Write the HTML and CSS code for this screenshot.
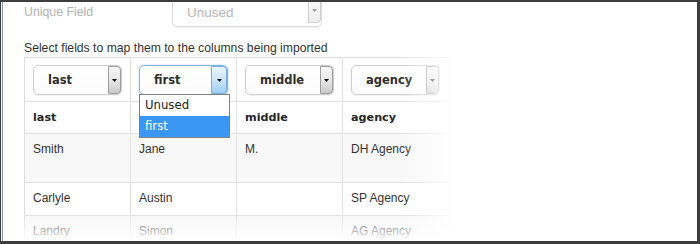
FILE: index.html
```html
<!DOCTYPE html>
<html>
<head>
<meta charset="utf-8">
<link rel="stylesheet" href="styles.css">
</head>
<body>
<div class="frame">
  <div class="page">
    <div class="field-row">
      <div class="field-label">Unique Field</div>
      <div class="uselect">
        <span class="uselect-text">Unused</span>
        <span class="btn btn-disabled"><svg width="5" height="3" viewBox="0 0 5 3"><polygon points="0,0 5,0 2.5,3" fill="#9a9a9a"/></svg></span>
      </div>
    </div>
    <div class="hint">Select fields to map them to the columns being imported</div>
    <div class="grid">
      <div class="cell sel-cell">
        <div class="select"><span class="select-text">last</span><span class="btn"><svg width="5" height="3" viewBox="0 0 5 3"><polygon points="0,0 5,0 2.5,3" fill="#111"/></svg></span></div>
      </div>
      <div class="cell sel-cell">
        <div class="select focus"><span class="select-text">first</span><span class="btn btn-focus"><svg width="5" height="3" viewBox="0 0 5 3"><polygon points="0,0 5,0 2.5,3" fill="#111"/></svg></span>
          <div class="dropdown">
            <div class="opt">Unused</div>
            <div class="opt opt-on">first</div>
          </div>
        </div>
      </div>
      <div class="cell sel-cell">
        <div class="select"><span class="select-text">middle</span><span class="btn"><svg width="5" height="3" viewBox="0 0 5 3"><polygon points="0,0 5,0 2.5,3" fill="#111"/></svg></span></div>
      </div>
      <div class="cell sel-cell">
        <div class="select"><span class="select-text">agency</span><span class="btn"><svg width="5" height="3" viewBox="0 0 5 3"><polygon points="0,0 5,0 2.5,3" fill="#111"/></svg></span></div>
      </div>

      <div class="cell head">last</div>
      <div class="cell head">first</div>
      <div class="cell head">middle</div>
      <div class="cell head">agency</div>

      <div class="cell data tall odd">Smith</div>
      <div class="cell data tall odd">Jane</div>
      <div class="cell data tall odd">M.</div>
      <div class="cell data tall odd">DH Agency</div>

      <div class="cell data">Carlyle</div>
      <div class="cell data">Austin</div>
      <div class="cell data"></div>
      <div class="cell data">SP Agency</div>

      <div class="cell data odd">Landry</div>
      <div class="cell data odd">Simon</div>
      <div class="cell data odd"></div>
      <div class="cell data odd">AG Agency</div>
    </div>
  </div>
  <div class="fade-right"></div>
  <div class="fade-bottom"></div>
</div>
</body>
</html>
```

FILE: styles.css
```css
html, body {
  margin: 0;
  padding: 0;
  background: #fff;
}
body {
  width: 700px;
  height: 244px;
  overflow: hidden;
}
.frame {
  position: relative;
  width: 700px;
  height: 244px;
  box-sizing: border-box;
  border-style: solid;
  border-color: #3d3d3d;
  border-width: 2px 3px 3px 1px;
  background: #fff;
  overflow: hidden;
  box-shadow: inset 1px 0 0 #f4f4f4, inset 2px 0 0 #8a98ad;
  font-family: "Liberation Sans", Arial, sans-serif;
  color: #333;
}
.page {
  padding-left: 23px;
}
.field-row {
  display: flex;
  align-items: center;
  height: 30px;
  margin-top: -5px;
}
.field-label {
  width: 148px;
  font-size: 12.3px;
  color: #b3b3b3;
  line-height: 14px;
  margin-top: -1px;
}
.uselect {
  display: flex;
  width: 150px;
  height: 30px;
  box-sizing: border-box;
  border: 1px solid #dcdcdc;
  border-radius: 5px;
  background: #fff;
  box-shadow: 0 1px 1px rgba(0,0,0,0.05);
}
.uselect-text {
  flex: 1;
  padding-left: 14px;
  font-size: 13.5px;
  line-height: 29px;
  color: #b5b5b5;
}
.hint {
  margin-top: 14px;
  font-size: 12.2px;
  line-height: 14px;
  color: #333;
}
.grid {
  margin-top: 2px;
  display: grid;
  grid-template-columns: repeat(4, 106px);
  border-top: 1px solid #dedede;
  border-left: 1px solid #dedede;
  width: max-content;
}
.cell {
  box-sizing: border-box;
  border-right: 1px solid #e2e2e2;
  border-bottom: 1px solid #e0e0e0;
  background: #fff;
}
.sel-cell {
  height: 44px;
  padding: 7px 0 0 8px;
}
.head {
  height: 32px;
  padding: 8px 8px 0;
  font-family: "DejaVu Sans", Verdana, sans-serif;
  font-weight: bold;
  font-size: 11.2px;
  line-height: 15px;
  color: #262626;
}
.data {
  height: 33px;
  padding: 8px 8px 0;
  font-size: 12px;
  line-height: 15px;
  color: #333;
}
.data.tall {
  height: 49px;
}
.odd {
  background: #f8f8f8;
}
.select {
  position: relative;
  display: flex;
  width: 89px;
  height: 30px;
  box-sizing: border-box;
  border: 1px solid #cfcfcf;
  border-radius: 5px;
  background: linear-gradient(#fff, #fcfcfc);
  box-shadow: 0 1px 1px rgba(0,0,0,0.06);
}
.select-text {
  flex: 1;
  padding-left: 14px;
  font-family: "DejaVu Sans", Verdana, sans-serif;
  font-weight: bold;
  font-size: 11.5px;
  line-height: 28px;
  color: #2f2f2f;
}
.btn {
  display: flex;
  align-items: center;
  justify-content: center;
  width: 13px;
  margin: 0;
  box-sizing: border-box;
  border: 1px solid #9d9d9d;
  border-radius: 0 4px 4px 0;
  background: linear-gradient(#f6f6f6, #e6e6e6 55%, #c9c9c9);
}
.btn-disabled {
  border-color: #cfcfcf;
  background: linear-gradient(#fbfbfb, #eeeeee);
  height: 26px;
  margin-top: -1px;
}
.select.focus {
  border-color: #7fb4e8;
  box-shadow: 0 0 2px rgba(90,160,230,0.6);
}
.btn-focus {
  width: 16px;
  border-color: #78acdf;
  background: linear-gradient(#e9f4fd, #c8e3fa 55%, #9fcdf3);
}
.dropdown {
  position: absolute;
  left: -1px;
  top: 28px;
  width: 91px;
  box-sizing: border-box;
  border: 1px solid #808080;
  background: #fff;
  z-index: 2;
  font-family: "DejaVu Sans", Verdana, sans-serif;
  font-size: 11.7px;
}
.opt {
  height: 21px;
  line-height: 21px;
  padding-left: 5px;
  color: #222;
}
.opt-on {
  background: #3a97f4;
  color: #fff;
}
.fade-right {
  position: absolute;
  top: 0;
  bottom: 0;
  left: 402px;
  right: 0;
  background: linear-gradient(to right, rgba(255,255,255,0) 0, rgba(255,255,255,0.9) 45px, #fff 52px);
  z-index: 3;
}
.fade-bottom {
  position: absolute;
  left: 2px;
  right: 0;
  top: 211px;
  bottom: 0;
  background: linear-gradient(rgba(255,255,255,0), rgba(255,255,255,0.97) 27px, #fff);
  z-index: 3;
}
```
